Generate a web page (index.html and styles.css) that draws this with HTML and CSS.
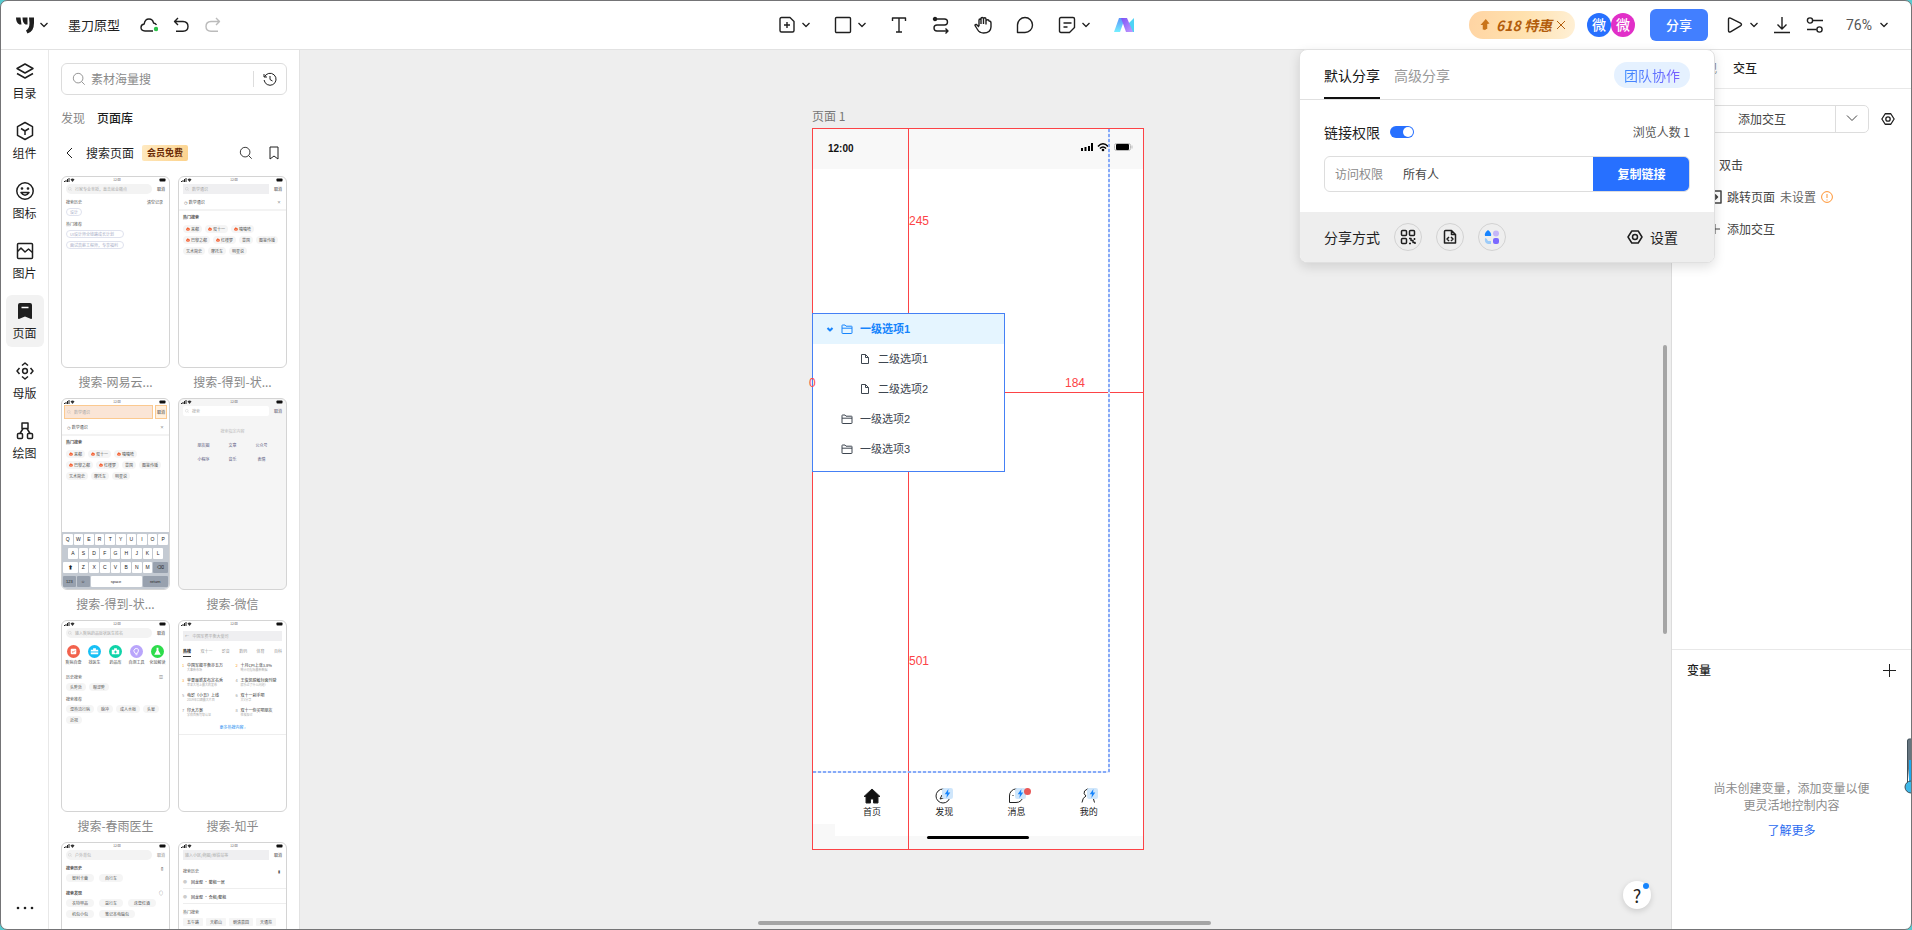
FILE: index.html
```html
<!DOCTYPE html>
<html lang="zh-CN">
<head>
  <meta charset="UTF-8">
  <title>墨刀原型</title>
  <meta name="viewport" content="width=device-width, initial-scale=1.0">
  <link rel="stylesheet" href="styles.css">
</head>
<body>
  <!-- shared icons -->
  <svg class="sprite" aria-hidden="true">
    <symbol id="chev" viewBox="0 0 8 8"><path d="M0.500 2l3.500 3.500L7.500 2"/></symbol>
    <symbol id="search" viewBox="0 0 16 16"><circle cx="7" cy="7" r="5.500"/><path d="M11 11l3.500 3.500"/></symbol>
    <symbol id="gear" viewBox="0 0 16 16"><path d="M4.800 2h6.400L15 8l-3.800 6H4.800L1 8z"/><circle cx="8" cy="8" r="2.500"/></symbol>
    <symbol id="signal" viewBox="0 0 11 4"><path d="M0 4V3h1v1zM1.500 4V2h1v2zM3 4V1h1v3zM4.500 4V0h1v4z" fill="#222"/><path d="M6.500 1.500Q8.500-.5 10.500 1.500L8.500 4z" fill="#333"/></symbol>
    <symbol id="battery" viewBox="0 0 7 4"><rect y="0.500" width="6" height="3" rx="0.800" fill="#111"/></symbol>
    <symbol id="flame" viewBox="0 0 4 4"><g stroke="none"><path d="M1.500 0Q3 .8 2.800 1.500L3.400 1Q4.600 3.900 2 4-.5 3.800.4 1.200L1 1.600Q1.600 1 1.500 0z" fill="#f4511e"/><circle cx="2" cy="2.900" r=".6" fill="#fff"/></g></symbol>
    <symbol id="folder" viewBox="0 0 12 12"><path d="M1 10V2.500Q1 2 1.500 2H4l1 1.200h5.500q.5 0 .5.500V10q0 .5-.5.500h-9Q1 10.500 1 10zM1 5.200h10"/></symbol>
    <symbol id="doc" viewBox="0 0 12 12"><path d="M2.500 1.500h4l3 3v6h-7zM6.500 1.500v3h3"/></symbol>
    <symbol id="bolt" viewBox="0 0 10 10"><g stroke="none"><rect width="10" height="10" rx="2" fill="#cfe6fb"/><path d="M5.800 1L2.500 5.600h2L4 9l3.500-4.800H5.500z" fill="#1684fc"/></g></symbol>
  </svg>

  <div class="window">
    <header class="topbar">
      <div class="bar-left">
        <button class="icon-btn pair" aria-label="菜单">
          <svg class="i18 solid" viewBox="0 0 18 18"><path d="M0 1.500h4.500l1 7H3.500Q0 7 0 1.500zM6.500 1.500h5v7H9.500Q6.500 7 6.500 1.500zM13 1.500h5V7q0 8.500-6.500 10.500L10 14.500Q13.500 12.500 13.500 7z"/></svg>
          <svg class="i8"><use href="#chev"/></svg>
        </button>
        <span class="project">墨刀原型</span>
        <div class="history">
          <button class="icon-btn" aria-label="已保存"><svg class="i18" viewBox="0 0 18 18"><path d="M13 15H5Q1 14.800 1 11.500 1 8.500 4.200 8 4.800 3 9 3q3.800 0 4.500 4 2 .3 3 2"/><circle cx="16" cy="13" r="2.200" fill="#2cc24a" stroke="none"/></svg></button>
          <button class="icon-btn" aria-label="撤销"><svg class="i18" viewBox="0 0 18 18"><path d="M6 2L2.500 5.500 6 9M3 5.500h8q5 .3 5 5 0 4.500-5 4.800H4"/></svg></button>
          <button class="icon-btn faded" aria-label="重做"><svg class="i18" viewBox="0 0 18 18"><path d="M12 2l3.500 3.500L12 9M15 5.500H7q-5 .3-5 5 0 4.500 5 4.800h7"/></svg></button>
        </div>
      </div>

      <div class="tools">
        <button class="icon-btn pair" aria-label="新建页面"><svg class="i18" viewBox="0 0 18 18"><path d="M3.500 1.500h8.500l4 4v9q0 1.500-1.500 1.500h-11Q2 16 2 14.500V3q0-1.500 1.500-1.500zM9 6v6M6 9h6"/></svg><svg class="i8"><use href="#chev"/></svg></button>
        <button class="icon-btn pair" aria-label="形状"><svg class="i18" viewBox="0 0 18 18"><rect x="1.500" y="1.500" width="15" height="15" rx="1"/></svg><svg class="i8"><use href="#chev"/></svg></button>
        <button class="icon-btn" aria-label="文字"><svg class="i18" viewBox="0 0 18 18"><path d="M2.500 5V2h13v3M9 2v14M6 16h6"/></svg></button>
        <button class="icon-btn" aria-label="连线"><svg class="i18" viewBox="0 0 18 18"><path d="M3 3h9.500q3 0 3 3t-3 3H5Q2 9 2 12t3 3h11M13.500 12.500L16 15l-2.500 2.500"/><circle cx="3" cy="3" r="1.500" fill="currentColor"/></svg></button>
        <button class="icon-btn" aria-label="抓手"><svg class="i18" viewBox="0 0 18 18"><path d="M5 10V4.200q0-1.200 1-1.200t1 1.200V8M7 8V2.800Q7 1.500 8.200 1.500T9.500 2.800V8M9.500 8V3q0-1.300 1.200-1.300T12 3v5.200M12 8.500V5q0-1.200 1.500-1.200T15 5q2 0 2 2v4q-.3 6-7.500 6-4 0-6-3.500L1 9.500q0-1.200 1.500-1L5 11"/></svg></button>
        <button class="icon-btn" aria-label="评论"><svg class="i18" viewBox="0 0 18 18"><path d="M1.500 16.500V9a7.500 7.500 0 1 1 7.500 7.500z"/></svg></button>
        <button class="icon-btn pair" aria-label="便签"><svg class="i18" viewBox="0 0 18 18"><path d="M3 1.500h12q1.500 0 1.500 1.500v8.500l-5 5H3q-1.500 0-1.500-1.500V3Q1.500 1.500 3 1.500zM5.500 7h8M5.500 11h4"/></svg><svg class="i8"><use href="#chev"/></svg></button>
        <button class="icon-btn" aria-label="AI">
          <svg class="i20" viewBox="0 0 20 18">
            <defs>
              <linearGradient id="aiA" x1="0" y1="1" x2="0" y2="0"><stop stop-color="#74f0ff"/><stop offset="1" stop-color="#5b93fa"/></linearGradient>
              <linearGradient id="aiB" x1="0" y1="0" x2="1" y2="1"><stop stop-color="#7b52f5"/><stop offset="1" stop-color="#c49bff"/></linearGradient>
            </defs>
            <g stroke="none"><path d="M0 16L5 2h6L6 16z" fill="url(#aiA)"/><path d="M13 9l7-7v14h-3z" fill="#4ed3f5"/><path d="M7 2h6l6 14h-7z" fill="url(#aiB)"/></g>
          </svg>
        </button>
      </div>

      <div class="bar-right">
        <div class="promo">
          <svg class="i12" viewBox="0 0 12 16"><path d="M7 0l5 6-3 .5V13q-2 0-3 2 0-1-3-1V8L0 8z" fill="#c9741b"/></svg>
          <b>618 特惠</b>
          <button class="icon-btn" aria-label="关闭"><svg class="i8" viewBox="0 0 8 8"><path d="M0 0l8 8M8 0L0 8"/></svg></button>
        </div>
        <div class="avatars"><span class="avatar">微</span><span class="avatar pink">微</span></div>
        <button class="share-btn">分享</button>
        <div class="actions">
          <button class="icon-btn pair" aria-label="预览"><svg class="i18" viewBox="0 0 18 18"><path d="M2.500 3.500q0-2 2-1.300l10 5q2 1.300 0 2.600l-10 6q-2 .8-2-1.200z"/></svg><svg class="i8"><use href="#chev"/></svg></button>
          <button class="icon-btn" aria-label="下载"><svg class="i18" viewBox="0 0 18 18"><path d="M9 1v12M4.500 8.500L9 13l4.500-4.500M1 16.500h16"/></svg></button>
          <button class="icon-btn" aria-label="偏好设置"><svg class="i18" viewBox="0 0 18 18"><circle cx="4" cy="4.500" r="2.600"/><path d="M6.600 4.500H17M1 13.500h9.500"/><circle cx="13.500" cy="13.500" r="2.600"/></svg></button>
        </div>
        <button class="icon-btn zoom">76%<svg class="i8"><use href="#chev"/></svg></button>
      </div>
    </header>

    <div class="workspace">
      <nav class="rail">
        <button class="rail-item"><svg class="i20" viewBox="0 0 20 20"><path d="M10 3l8 4.500-8 4.500-8-4.500zM2 12.500l8 4.500 8-4.500"/></svg>目录</button>
        <button class="rail-item"><svg class="i20" viewBox="0 0 20 20"><path d="M10 1.500l7.500 4.200v8.600L10 18.500l-7.500-4.200V5.700zM6 7.500L10 10l4-2.500M10 10v4"/></svg>组件</button>
        <button class="rail-item"><svg class="i20" viewBox="0 0 20 20"><circle cx="10" cy="10" r="8.200"/><path d="M6 11.500q4 5.500 8 0z"/><circle cx="7" cy="7.500" r=".6"/><circle cx="13" cy="7.500" r=".6"/></svg>图标</button>
        <button class="rail-item"><svg class="i20" viewBox="0 0 20 20"><rect x="2.500" y="2.500" width="15" height="15" rx="1"/><path d="M2.500 10.500L6 7l4 4 3.500-3 4 3.500"/></svg>图片</button>
        <button class="rail-item active"><svg class="i20" viewBox="0 0 20 20"><path d="M5 2h10q2 0 2 2v13q0 1.500-1.500.8L10 15.500 4.500 17.800Q3 18.500 3 17V4q0-2 2-2z" fill="currentColor" stroke="none"/><path d="M6.500 6.500h7" stroke="#fff"/></svg>页面</button>
        <button class="rail-item"><svg class="i20" viewBox="0 0 20 20"><circle cx="10" cy="10" r="2.400"/><path d="M7 4.500L10 2l3 2.500M7 15.500l3 2.500 3-2.500M4.500 7L2 10l2.500 3M15.500 7l2.500 3-2.500 3"/></svg>母版</button>
        <button class="rail-item"><svg class="i20" viewBox="0 0 20 20"><rect x="7" y="2" width="6" height="5.500"/><rect x="2.500" y="12.500" width="5" height="5" rx="1"/><rect x="12.500" y="12.500" width="5" height="5" rx="1"/><path d="M8 7.500l-3 5M12 7.500l3 5"/></svg>绘图</button>
        <button class="icon-btn more" aria-label="更多"><svg class="i18 solid" viewBox="0 0 18 18"><circle cx="2" cy="9" r="1.300"/><circle cx="9" cy="9" r="1.300"/><circle cx="16" cy="9" r="1.300"/></svg></button>
      </nav>

      <aside class="library">
        <div class="searchbox">
          <svg class="i14"><use href="#search"/></svg>
          <input type="text" placeholder="素材海量搜" aria-label="素材海量搜">
          <button class="icon-btn" aria-label="历史"><svg class="i14" viewBox="0 0 14 14"><path d="M1 2v3h3M1.500 5a6 6 0 1 1-.4 3M7 4v3.500L9.500 9"/></svg></button>
        </div>
        <div class="lib-tabs"><button>发现</button><button class="on">页面库</button></div>
        <div class="crumb">
          <button class="icon-btn" aria-label="返回"><svg class="i10" viewBox="0 0 10 10"><path d="M7 0L2 5l5 5"/></svg></button>
          <span>搜索页面</span>
          <b class="vip">会员免费</b>
          <button class="icon-btn push" aria-label="搜索"><svg class="i14"><use href="#search"/></svg></button>
          <button class="icon-btn" aria-label="收藏"><svg class="i14" viewBox="0 0 14 14"><path d="M3 1h8v12L7 10l-4 3z"/></svg></button>
        </div>

        <div class="cards">
          <figure>
            <div class="thumb">
              <div class="st"><svg><use href="#signal"/></svg>12:00<svg><use href="#battery"/></svg></div>
              <div class="find"><span class="box round"><svg><use href="#search"/></svg>行家专业亲授，直击就业痛点</span><b>取消</b></div>
              <div class="row"><span>搜索历史</span><span>清空记录</span></div>
              <div class="chips line"><i>设计</i></div>
              <div class="row">热门推荐</div>
              <div class="chips line wide"><i>UI设计师全链路成长计划</i><i>面试高薪工程师，专享福利</i></div>
            </div>
            <figcaption>搜索-网易云...</figcaption>
          </figure>

          <figure>
            <div class="thumb">
              <div class="st"><svg><use href="#signal"/></svg>12:00<svg><use href="#battery"/></svg></div>
              <div class="find"><span class="box"><svg><use href="#search"/></svg>数学通识</span><b>取消</b></div>
              <div class="row recent"><span>◷&nbsp; 数学通识</span><span>×</span></div>
              <h6>热门搜索</h6>
              <div class="chips">
                <i><svg><use href="#flame"/></svg>来都</i><i><svg><use href="#flame"/></svg>双十一</i><i><svg><use href="#flame"/></svg>嘻嘻哈</i>
              </div>
              <div class="chips">
                <i><svg><use href="#flame"/></svg>巴黎之都</i><i><svg><use href="#flame"/></svg>红楼梦</i><i>曾国</i><i>图鉴传播</i>
              </div>
              <div class="chips"><i>艺术简史</i><i>摩托车</i><i>明星说</i></div>
            </div>
            <figcaption>搜索-得到-状...</figcaption>
          </figure>

          <figure>
            <div class="thumb">
              <div class="st"><svg><use href="#signal"/></svg>12:00<svg><use href="#battery"/></svg></div>
              <div class="find marked"><span class="box"><svg><use href="#search"/></svg>数学通识</span><b>取消</b></div>
              <div class="row recent"><span>◷&nbsp; 数学通识</span><span>×</span></div>
              <h6>热门搜索</h6>
              <div class="chips">
                <i><svg><use href="#flame"/></svg>来都</i><i><svg><use href="#flame"/></svg>双十一</i><i><svg><use href="#flame"/></svg>嘻嘻哈</i>
              </div>
              <div class="chips">
                <i><svg><use href="#flame"/></svg>巴黎之都</i><i><svg><use href="#flame"/></svg>红楼梦</i><i>曾国</i><i>图鉴传播</i>
              </div>
              <div class="chips"><i>艺术简史</i><i>摩托车</i><i>明星说</i></div>
              <div class="keyboard">
                <div><kbd>Q</kbd><kbd>W</kbd><kbd>E</kbd><kbd>R</kbd><kbd>T</kbd><kbd>Y</kbd><kbd>U</kbd><kbd>I</kbd><kbd>O</kbd><kbd>P</kbd></div>
                <div class="mid"><kbd>A</kbd><kbd>S</kbd><kbd>D</kbd><kbd>F</kbd><kbd>G</kbd><kbd>H</kbd><kbd>J</kbd><kbd>K</kbd><kbd>L</kbd></div>
                <div><kbd class="k2">⬆</kbd><kbd>Z</kbd><kbd>X</kbd><kbd>C</kbd><kbd>V</kbd><kbd>B</kbd><kbd>N</kbd><kbd>M</kbd><kbd class="k2 dark">⌫</kbd></div>
                <div class="last"><kbd class="k2 dark">123</kbd><kbd class="k2 dark">☺</kbd><kbd class="k8">space</kbd><kbd class="k4 dark">return</kbd></div>
              </div>
            </div>
            <figcaption>搜索-得到-状...</figcaption>
          </figure>

          <figure>
            <div class="thumb gray">
              <div class="st"><svg><use href="#signal"/></svg>12:00<svg><use href="#battery"/></svg></div>
              <div class="find"><span class="box"><svg><use href="#search"/></svg>搜索</span><b>取消</b></div>
              <p class="hint">搜索指定内容</p>
              <div class="scopes"><span>朋友圈</span><span>文章</span><span>公众号</span><span>小程序</span><span>音乐</span><span>表情</span></div>
            </div>
            <figcaption>搜索-微信</figcaption>
          </figure>

          <figure>
            <div class="thumb">
              <div class="st"><svg><use href="#signal"/></svg>12:00<svg><use href="#battery"/></svg></div>
              <div class="find"><span class="box round"><svg><use href="#search"/></svg>输入疾病药品症状医生姓名</span><b>取消</b></div>
              <div class="apps">
                <span><svg viewBox="0 0 14 14"><circle cx="7" cy="7" r="7" fill="#f2624d"/><rect x="4" y="4" width="6" height="6" rx="1" fill="#fff"/><path d="M5.500 7l1 1 2-2" stroke="#f2624d"/></svg>疾病自查</span>
                <span><svg viewBox="0 0 14 14"><circle cx="7" cy="7" r="7" fill="#16bff5"/><path d="M3 5h8v5H3zM5.500 5V3.500h3V5" fill="#fff"/><path d="M3 7.500h8" stroke="#16bff5"/></svg>找医生</span>
                <span><svg viewBox="0 0 14 14"><circle cx="7" cy="7" r="7" fill="#0fd3a8"/><path d="M3 5h8v5H3zM5.500 5V3.500h3V5" fill="#fff"/><path d="M7 6v3M5.500 7.500h3" stroke="#0fd3a8"/></svg>药品库</span>
                <span><svg viewBox="0 0 14 14"><circle cx="7" cy="7" r="7" fill="#b9a5fb"/><path d="M5.500 9q-3-3 0-5 4-1 3.500 2.500L8 9zM6 10.500h2" stroke="#fff" fill="none"/></svg>自测工具</span>
                <span><svg viewBox="0 0 14 14"><circle cx="7" cy="7" r="7" fill="#2ddc4b"/><path d="M6 3h2v3l2.500 4.500h-7L6 6z" fill="#fff"/></svg>化验解读</span>
              </div>
              <div class="row"><span>历史搜索</span><span>▥</span></div>
              <div class="chips roomy"><i>头疼处</i><i>眼涩疼</i></div>
              <div class="row">搜索推荐</div>
              <div class="chips roomy"><i>湿热流行病</i><i>脉冲</i><i>成人水痘</i><i>头晕</i></div>
              <div class="chips roomy"><i>近视</i></div>
            </div>
            <figcaption>搜索-春雨医生</figcaption>
          </figure>

          <figure>
            <div class="thumb">
              <div class="st"><svg><use href="#signal"/></svg>12:00<svg><use href="#battery"/></svg></div>
              <div class="find tall"><span class="box">←&nbsp;&nbsp;&nbsp; 中国军费平衡大使司</span></div>
              <div class="channels"><b>热榜</b><span>双十一</span><span>影音</span><span>数码</span><span>体育</span><span>百科</span></div>
              <div class="hot">
                <p><em>1</em>中国军舰平衡亦五万<small>大事新市场</small></p><p><em>2</em>十月CPI上涨3.8%<small>统计局指标最新数据</small></p>
                <p><em>3</em>苹果最新发布定名秀<small>苹果大地上最大的发布</small></p><p><u>4</u>王俊凯脱敏封面刊登<small>娱乐过了什么问题?</small></p>
                <p><u>5</u>电影《小丑》上线<small>2019年口碑最大片目</small></p><p><u>6</u>双十一剁手吧<small>大V分享</small></p>
                <p><u>7</u>印大方案<small>学校首款可穿认证</small></p><p><u>8</u>双十一你买吧朋友<small>性格探讨</small></p>
              </div>
              <p class="all">更多热搜内容 ›</p>
            </div>
            <figcaption>搜索-知乎</figcaption>
          </figure>

          <figure>
            <div class="thumb">
              <div class="st"><svg><use href="#signal"/></svg>12:00<svg><use href="#battery"/></svg></div>
              <div class="find light"><span class="box round"><svg><use href="#search"/></svg>户外背包</span><b>取消</b></div>
              <div class="row strong"><span>搜索历史</span><span>▯</span></div>
              <div class="chips big"><i>智利卡蕾</i><i>自行车</i></div>
              <div class="row strong low"><span>搜索发现</span><span>○</span></div>
              <div class="chips big"><i>农特甲品</i><i>益行车</i><i>床垫红酒</i></div>
              <div class="chips big"><i>机包小包</i><i>笔记本电脑包</i></div>
            </div>
          </figure>

          <figure>
            <div class="thumb">
              <div class="st"><svg><use href="#signal"/></svg>12:00<svg><use href="#battery"/></svg></div>
              <div class="find"><span class="box">输入小区/商圈/地铁站等</span><b>取消</b></div>
              <div class="row low"><span>搜索历史</span><span>▮</span></div>
              <div class="row place"><small>●</small>回龙观 · 整租一居</div>
              <div class="row place"><small>●</small>回龙观 · 合租/整租</div>
              <div class="row">热门搜索</div>
              <div class="chips square roomy"><i>五午路</i><i>天鹅山</i><i>朝清嘉园</i><i>天通苑</i></div>
            </div>
          </figure>
        </div>
      </aside>

      <main class="canvas">
        <div class="page">
          <div class="page-name">页面 1</div>
          <div class="phone">
            <div class="phone-status">
              <b>12:00</b>
              <svg viewBox="0 0 52 10"><path d="M0 9V6h2v3zM3.500 9V5h2v4zM7 9V4h2v5zM10 9V1h2v8z"/><path d="M17 4.500Q22-1 27 4.500M19 6.500q3-3 6 0" fill="none" stroke="#000" stroke-width="1.600"/><circle cx="22" cy="8" r="1.300"/><rect x="33.500" y="1.500" width="16" height="7" rx="2" fill="none" stroke="#bbb"/><rect x="35" y="2" width="13" height="6" rx="1"/><path d="M51 3.500v3" stroke="#bbb"/></svg>
            </div>
            <div class="phone-body">
              <ul class="tree">
                <li class="sel"><svg class="i8 bold" viewBox="0 0 8 8"><path d="M1.500 3L4 5.500 6.500 3"/></svg><svg class="i12"><use href="#folder"/></svg>一级选项1</li>
                <li class="sub"><svg class="i12"><use href="#doc"/></svg>二级选项1</li>
                <li class="sub"><svg class="i12"><use href="#doc"/></svg>二级选项2</li>
                <li><svg class="i12"><use href="#folder"/></svg>一级选项2</li>
                <li><svg class="i12"><use href="#folder"/></svg>一级选项3</li>
              </ul>
            </div>
            <div class="tabbar">
              <a href="#home"><svg viewBox="0 0 20 16"><path d="M10 1l8 7.500h-2V15h-4.500v-4h-3v4H4V8.500H2z" fill="#111"/></svg>首页</a>
              <a href="#find"><svg viewBox="0 0 20 16"><circle cx="9" cy="8" r="7"/><path d="M6 11l2-4 2 3z"/><use href="#bolt" x="8" y="0" width="11" height="11"/></svg>发现</a>
              <a href="#msg"><svg viewBox="0 0 20 16"><path d="M2.500 14.500V8A6.800 6.800 0 1 1 9 14.500z"/><path d="M6 7v1"/><use href="#bolt" x="8" y="0" width="11" height="11"/></svg>消息<span class="dot"></span></a>
              <a href="#me"><svg viewBox="0 0 20 16"><path d="M7 8Q4 6 5.500 3 8-.5 12 2M7 8q-3.500 1.500-4 6.500M12 8q3 2 3.500 6.500"/><use href="#bolt" x="8" y="0" width="11" height="11"/></svg>我的</a>
            </div>
            <div class="home-area"><span></span></div>

            <span class="guide v"></span>
            <span class="guide h"></span>
            <span class="guide dash"></span>
            <span class="num top">245</span>
            <span class="num left">0</span>
            <span class="num right">184</span>
            <span class="num bottom">501</span>
          </div>
        </div>
        <span class="scroll-v"></span>
        <span class="scroll-h"></span>
        <button class="help" aria-label="帮助">?</button>
      </main>

      <aside class="inspector">
        <div class="ins-tabs"><button>外观</button><button class="on">交互</button></div>
        <div class="ins-body">
          <div class="add-row">
            <div class="split"><button>添加交互</button><button aria-label="更多"><svg class="i12" viewBox="0 0 12 12"><path d="M1 3.500l5 5 5-5"/></svg></button></div>
            <button class="icon-btn" aria-label="交互设置"><svg class="i14 mid-line"><use href="#gear"/></svg></button>
          </div>
          <ul class="events">
            <li><span></span>双击</li>
            <li><svg class="i14 mid-line" viewBox="0 0 14 14"><path d="M4 1h9v12H4M1 7h8M7 4.500L9.500 7 7 9.500"/></svg>跳转页面<em>未设置</em><svg class="i12 warn" viewBox="0 0 12 12"><circle cx="6" cy="6" r="5.400"/><path d="M6 3v4M6 8.500v1"/></svg></li>
            <li><svg class="i14" viewBox="0 0 14 14"><path d="M2 7h10M7 2v10"/></svg>添加交互</li>
          </ul>
        </div>
        <section class="vars">
          <h3>变量<button class="icon-btn" aria-label="添加变量"><svg class="i14" viewBox="0 0 14 14"><path d="M7.500 1v13M1 7.500h13"/></svg></button></h3>
          <div class="empty">
            <p>尚未创建变量，添加变量以便<br>更灵活地控制内容</p>
            <a href="#more">了解更多</a>
          </div>
        </section>
      </aside>
    </div>

    <div class="popover">
      <div class="pop-head">
        <button class="on">默认分享</button><button>高级分享</button>
        <button class="team"><span>团队协作</span></button>
      </div>
      <div class="pop-body">
        <div class="perm">
          <label for="link">链接权限</label><input type="checkbox" id="link" checked>
          <span>浏览人数 1</span>
        </div>
        <div class="access">
          <label for="who">访问权限</label>
          <select id="who"><option>所有人</option></select>
          <button>复制链接</button>
        </div>
      </div>
      <div class="pop-foot">
        <span>分享方式</span>
        <button class="way" aria-label="二维码"><svg class="i16" viewBox="0 0 16 16"><rect x="1.500" y="1.500" width="5" height="5" rx="1"/><rect x="9.500" y="1.500" width="5" height="5" rx="1"/><rect x="1.500" y="9.500" width="5" height="5" rx="1"/><path d="M9 9.500h2v2h2v2h2v1.500M14.500 9v2M9 14.500h2"/></svg></button>
        <button class="way" aria-label="嵌入代码"><svg class="i16" viewBox="0 0 16 16"><path d="M3.500 1.500h6l4 4v8.500h-11V2.500q0-1 1-1zM9.500 1.500v4h4M7 8l-2 2 2 2M9 8l2 2-2 2"/></svg></button>
        <button class="way" aria-label="应用"><svg class="i16" viewBox="0 0 16 16"><g stroke="none"><path d="M4 1q4 3 3 6H1Q0 4 4 1z" fill="#1784ff"/><circle cx="12" cy="4.500" r="3" fill="#c4b5f8"/><path d="M1 9q2 0 3 3 1 0 3 0v3H4q-4-1-3-6z" fill="#9ccbf8"/><rect x="9" y="9" width="6" height="6" rx="2" fill="#7b68ff"/></g></svg></button>
        <button class="settings"><svg class="i16"><use href="#gear"/></svg>设置</button>
      </div>
    </div>

    <svg class="meter" viewBox="0 0 8 56"><path d="M8 1H5Q3.500 1 3.500 3v43" fill="#66757f" stroke="#40505a"/><path d="M8 0v22H5V3q0-2 3-2z" fill="#66757f"/><path d="M5 22h3v26H5z" fill="#1fa8ee"/><circle cx="7" cy="49" r="6" fill="#3db8e8" stroke="#40505a"/></svg>
  </div>
</body>
</html>
```
FILE: styles.css
```css
* {
  box-sizing: border-box;
}
body {
  margin: 0;
  height: 100vh;
  background: #56cbd0;
  color: #1f1f1f;
  font-family: "Noto Sans CJK SC", "Liberation Sans", sans-serif;
  font-size: 12px;
  line-height: 16px;
}
button, input, select {
  font: inherit;
  color: inherit;
}
button {
  padding: 0;
  border: 0;
  background: none;
  cursor: pointer;
}
svg {
  flex: none;
  fill: none;
  stroke: currentColor;
  stroke-linejoin: round;
}
p, h3, h6, ul, figure {
  margin: 0;
  padding: 0;
}
ul {
  list-style: none;
}
em, i {
  font-style: normal;
}
.sprite {
  display: none;
}
.i8 { width: 8px; height: 8px; stroke-width: 1.3; }
.i10 { width: 10px; height: 10px; }
.i12 { width: 12px; height: 12px; }
.i14 { width: 14px; height: 14px; }
.i16 { width: 16px; height: 16px; stroke-width: 1.5; }
.i18 { width: 18px; height: 18px; stroke-width: 1.4; }
.i20 { width: 20px; height: 20px; stroke-width: 1.5; }
.bold { stroke-width: 2; }
.mid-line { stroke-width: 1.5; }
.solid {
  fill: currentColor;
  stroke: none;
}
.icon-btn {
  display: flex;
  align-items: center;
}
.pair {
  gap: 6px;
}
.faded {
  color: #bbb;
}

.window {
  position: relative;
  display: flex;
  flex-direction: column;
  height: 100vh;
  border: 1px solid #747476;
  border-radius: 7px;
  background: #fff;
  overflow: hidden;
}

/* top bar */
.topbar {
  display: grid;
  grid-template-columns: 1fr auto 1fr;
  align-items: center;
  height: 49px;
  flex: none;
  border-bottom: 1px solid #e2e2e2;
}
.bar-left, .bar-right, .tools, .history, .actions, .avatars {
  display: flex;
  align-items: center;
}
.bar-left {
  padding-left: 15px;
  gap: 20px;
}
.project {
  font-size: 13px;
}
.history {
  gap: 14px;
}
.tools {
  gap: 24px;
}
.bar-right {
  justify-content: flex-end;
  padding-right: 23px;
}
.promo {
  display: flex;
  align-items: center;
  gap: 5px;
  height: 28px;
  margin-right: 12px;
  padding: 0 10px;
  border-radius: 14px;
  background: linear-gradient(100deg, #ffd4a3, #ffe1ae 50%, #fff0d6);
  color: #b35d0c;
}
.promo svg {
  stroke-width: 1;
}
.promo > svg {
  stroke: none;
}
.promo b {
  font-size: 14px;
  font-style: italic;
}
.avatars {
  margin-right: 15px;
}
.avatar {
  width: 24px;
  height: 24px;
  border-radius: 50%;
  background: #2770ff;
  color: #fff;
  font-size: 14px;
  font-weight: 500;
  line-height: 23px;
  text-align: center;
}
.avatar.pink {
  background: #e12fc8;
}
.share-btn {
  width: 58px;
  height: 32px;
  margin-right: 18px;
  border-radius: 6px;
  background: #427fff;
  color: #fff;
  font-size: 13px;
  font-weight: 500;
}
.actions {
  gap: 15px;
  margin-right: 22px;
}
.zoom {
  gap: 8px;
  font-family: Roboto, "Liberation Sans", sans-serif;
  font-size: 14px;
  color: #555;
}
.zoom svg {
  color: #1f1f1f;
}

.workspace {
  display: flex;
  flex: 1;
  min-height: 0;
}

/* left rail */
.rail {
  display: flex;
  flex-direction: column;
  align-items: center;
  gap: 8px;
  width: 48px;
  flex: none;
  padding: 5px 0 12px;
  border-right: 1px solid #e8e8e8;
}
.rail-item {
  display: flex;
  flex-direction: column;
  align-items: center;
  justify-content: center;
  gap: 4px;
  width: 38px;
  height: 52px;
  border-radius: 6px;
}
.rail-item.active {
  background: #f2f2f2;
}
.more {
  margin-top: auto;
}

/* page library */
.library {
  width: 251px;
  flex: none;
  padding: 13px 12px 0;
  border-right: 1px solid #e2e2e2;
  overflow: hidden;
}
.searchbox {
  display: flex;
  align-items: center;
  gap: 5px;
  height: 32px;
  padding: 0 9px 0 10px;
  border: 1px solid #dcdcdc;
  border-radius: 6px;
}
.searchbox > svg {
  color: #888;
}
.searchbox input {
  flex: 1;
  min-width: 0;
  border: 0;
  padding: 0;
  outline: 0;
}
.searchbox input::placeholder {
  color: #8a8a8a;
}
.searchbox .icon-btn {
  padding-left: 9px;
  height: 16px;
  border-left: 1px solid #ddd;
}
.lib-tabs {
  display: flex;
  gap: 12px;
  margin-top: 15px;
}
.lib-tabs button {
  color: #888;
}
.lib-tabs .on {
  color: #1f1f1f;
  font-weight: 500;
}
.crumb {
  display: flex;
  align-items: center;
  gap: 8px;
  margin: 18px 6px 14px 4px;
  height: 18px;
}
.crumb > span {
  margin-left: 3px;
}
.vip {
  padding: 0 5px;
  border-radius: 2px;
  background: linear-gradient(120deg, #ffeac2, #fcd28b);
  color: #6b2b06;
  font-size: 9px;
}
.push {
  margin-left: auto;
  margin-right: 6px;
}
.cards {
  display: grid;
  grid-template-columns: 1fr 1fr;
  gap: 8px;
}
figcaption {
  height: 22px;
  padding-top: 6px;
  color: #888;
  text-align: center;
}

/* thumbnails */
.thumb {
  display: flex;
  flex-direction: column;
  height: 192px;
  border: 1px solid #d4d4d4;
  border-radius: 6px;
  overflow: hidden;
  font-size: 4px;
  line-height: 6px;
  color: #555;
}
.thumb.gray {
  background: #f5f5f5;
}
.thumb svg {
  width: 4px;
  height: 4px;
}
.st {
  display: flex;
  justify-content: space-between;
  align-items: center;
  height: 6px;
  padding: 0 2px;
  font-size: 3px;
}
.st svg:first-child {
  width: 11px;
  stroke: none;
}
.st svg:last-child {
  width: 8px;
  stroke: none;
}
.find {
  display: flex;
  align-items: center;
  gap: 5px;
  margin: 1px 4px 0;
  height: 10px;
}
.find .box {
  display: flex;
  align-items: center;
  gap: 3px;
  flex: 1;
  height: 10px;
  padding: 0 2px;
  background: #efeff1;
  color: #aaa;
}
.find .round {
  border-radius: 5px;
  background: #f3f3f3;
}
.find b {
  font-weight: 500;
}
.find.light b {
  color: #999;
}
.find.marked {
  gap: 2px;
  height: 14px;
  margin: 0 2px;
  align-items: stretch;
}
.find.marked .box, .find.marked b {
  height: 14px;
  border: 1px solid #fbc98f;
  background: #fae5d6;
  line-height: 12px;
}
.find.marked b {
  padding: 0 1px;
  background: #fff0de;
}
.find.tall {
  margin-top: 4px;
}
.gray .find .box {
  border-radius: 2px;
  background: #fff;
}
.gray .find b {
  color: #667;
}
.row {
  display: flex;
  justify-content: space-between;
  margin: 5px 6px 0 4px;
}
.low {
  margin-top: 8px;
}
.strong {
  font-weight: 700;
}
.recent {
  margin: 0;
  padding: 5px 5px 4px;
  border-bottom: 2px solid #f3f3f3;
}
.thumb h6 {
  margin: 3px 4px 2px;
  font-size: 4px;
}
.chips {
  display: flex;
  gap: 3px;
  margin: 3px 4px 0;
}
.chips i {
  display: flex;
  align-items: center;
  gap: 1px;
  height: 8px;
  padding: 0 3px;
  border-radius: 4px;
  background: #f5f5f5;
  white-space: nowrap;
}
.roomy i {
  padding: 0 4px;
}
.line i {
  border: 1px solid #dfe2ee;
  background: #fff;
  color: #a8aec8;
}
.wide {
  flex-direction: column;
  align-items: flex-start;
}
.wide i {
  width: 58px;
}
.big {
  gap: 5px;
}
.big i {
  padding: 0 6px;
}
.square i {
  border-radius: 1px;
}
.place {
  gap: 4px;
  margin-right: 0;
  padding-bottom: 3px;
  border-bottom: 1px solid #eee;
  justify-content: flex-start;
  color: #333;
}
.place small {
  font-size: 4px;
  color: #ccc;
}
.keyboard {
  display: flex;
  flex-direction: column;
  gap: 3px;
  margin-top: auto;
  padding: 2px 1px;
  background: #c4cad2;
}
.keyboard div {
  display: flex;
  gap: 1px;
}
.keyboard .mid {
  padding: 0 5px;
}
.keyboard kbd {
  flex: 1;
  height: 11px;
  border-radius: 1px;
  background: #fff;
  color: #222;
  font: 5px/11px "Liberation Sans", sans-serif;
  text-align: center;
}
.keyboard .k2 {
  flex: 1.5;
}
.keyboard .k4 {
  flex: 3;
}
.keyboard .k8 {
  flex: 6;
}
.keyboard .last kbd {
  font-size: 4px;
}
.keyboard .dark {
  background: #98a1ae;
}
.hint {
  padding-top: 12px;
  text-align: center;
  color: #bbb;
}
.scopes {
  display: grid;
  grid-template-columns: repeat(3, 1fr);
  gap: 8px 0;
  padding: 8px 10px;
  text-align: center;
  color: #5a5a80;
}
.apps {
  display: flex;
  justify-content: space-between;
  margin: 7px 2px 4px;
}
.apps span {
  display: flex;
  flex-direction: column;
  align-items: center;
  gap: 1px;
  width: 19px;
}
.apps svg {
  width: 13px;
  height: 13px;
  stroke: none;
}
.channels {
  display: flex;
  justify-content: space-between;
  margin: 7px 4px 6px;
  color: #999;
}
.channels b {
  padding-bottom: 2px;
  border-bottom: 1px solid #333;
  color: #111;
}
.hot {
  display: grid;
  grid-template-columns: 1fr 1fr;
  gap: 5px 6px;
  padding: 0 3px;
  line-height: 5px;
  color: #333;
}
.hot p {
  white-space: nowrap;
}
.hot em, .hot u {
  display: inline-block;
  width: 5px;
  color: #f9a01b;
  text-decoration: none;
}
.hot u {
  color: #999;
}
.hot small {
  display: block;
  padding-left: 5px;
  font-size: 3px;
  color: #aaa;
}
.all {
  padding: 6px 0 4px;
  border-bottom: 1px solid #eee;
  color: #1b8cf0;
  text-align: center;
}

/* canvas */
.canvas {
  position: relative;
  display: flex;
  justify-content: center;
  flex: 1;
  min-width: 0;
  padding: 58px 15px 0 0;
  background: #eee;
  overflow: hidden;
}
.page {
  width: 332px;
}
.page-name {
  height: 20px;
  line-height: 15px;
  color: #777;
}
.phone {
  position: relative;
  display: flex;
  flex-direction: column;
  height: 722px;
  border: 1px solid #fc4346;
  background: #fff;
}
.phone-status {
  display: flex;
  justify-content: space-between;
  height: 40px;
  padding: 13px 10px 0 15px;
  background: #f8f8f8;
}
.phone-status b {
  color: #111;
  font: 700 10px/14px "Liberation Sans", sans-serif;
}
.phone-status svg {
  width: 52px;
  height: 10px;
  fill: #000;
  stroke: none;
}
.phone-body {
  flex: 1;
  padding-top: 144px;
}
.tree {
  position: relative;
  z-index: 1;
  width: 193px;
  height: 159px;
  margin-left: -1px;
  border: 1px solid #4580f5;
  background: #fff;
  color: #3e4650;
  font-family: "Liberation Sans", "Noto Sans CJK SC", sans-serif;
  font-size: 11px;
}
.tree li {
  display: flex;
  align-items: center;
  gap: 7px;
  height: 30px;
  padding-left: 28px;
}
.tree .sel {
  padding-left: 13px;
  background: #e5f5ff;
  color: #1684fc;
  font-weight: 700;
}
.tree .sub {
  padding-left: 46px;
}
.tabbar {
  display: flex;
  height: 52px;
  padding: 4px 18px 0 23px;
  background: linear-gradient(#f8f8f8, #f8f8f8) left bottom / 22px 12px no-repeat;
}
.tabbar a {
  position: relative;
  display: flex;
  flex-direction: column;
  align-items: center;
  gap: 1px;
  flex: 1;
  color: #222;
  font-size: 9px;
  line-height: 14px;
  text-decoration: none;
}
.tabbar svg {
  width: 20px;
  height: 16px;
}
.dot {
  position: absolute;
  top: 0;
  left: 43px;
  width: 7px;
  height: 7px;
  border-radius: 50%;
  background: #e85858;
}
.home-area {
  height: 13px;
  background: #f8f8f8;
}
.home-area span {
  display: block;
  width: 102px;
  height: 3px;
  margin: 0 auto;
  border-radius: 2px;
  background: #000;
}

/* distance guides, laid over the artboard */
.guide, .num {
  position: absolute;
}
.guide.v {
  left: 95px;
  top: 0;
  bottom: 0;
  width: 1px;
  background: #fc4346;
}
.guide.h {
  left: 192px;
  right: 0;
  top: 263px;
  height: 1px;
  background: #fc4346;
}
.guide.dash {
  left: 0;
  top: 0;
  width: 297px;
  height: 644px;
  background:
    repeating-linear-gradient(#86aaf8 0 3px, #e4ecfd 3px 5px) right top / 2px 100% no-repeat,
    repeating-linear-gradient(90deg, #86aaf8 0 3px, #e4ecfd 3px 5px) left bottom / 100% 2px no-repeat;
}
.num {
  z-index: 2;
  color: #fc4346;
  font-family: "Liberation Sans", sans-serif;
}
.num.top {
  left: 96px;
  top: 84px;
}
.num.bottom {
  left: 96px;
  top: 524px;
}
.num.left {
  left: -4px;
  top: 246px;
}
.num.right {
  right: 58px;
  top: 246px;
}
.scroll-v, .scroll-h {
  position: absolute;
  border-radius: 2px;
  background: #a5a5a5;
}
.scroll-v {
  right: 4px;
  top: 295px;
  width: 4px;
  height: 289px;
}
.scroll-h {
  left: 458px;
  bottom: 4px;
  width: 453px;
  height: 4px;
}
.help {
  position: absolute;
  right: 20px;
  bottom: 20px;
  width: 28px;
  height: 28px;
  border-radius: 50%;
  background: #fff;
  box-shadow: 0 2px 6px rgba(0,0,0,0.15);
  font-size: 18px;
}
.help::after {
  content: "";
  position: absolute;
  top: 2px;
  right: 2px;
  width: 6px;
  height: 6px;
  border-radius: 50%;
  background: #1684fc;
}

/* right panel */
.inspector {
  display: flex;
  flex-direction: column;
  width: 240px;
  flex: none;
  border-left: 1px solid #dcdcdc;
}
.ins-tabs {
  display: flex;
  gap: 16px;
  height: 39px;
  padding: 0 0 2px 21px;
  border-bottom: 1px solid #e8e8e8;
  color: #888;
}
.ins-tabs .on {
  color: #1f1f1f;
  font-weight: 500;
}
.ins-body {
  flex: 1;
  padding: 16px;
}
.add-row {
  display: flex;
  justify-content: space-between;
  align-items: center;
}
.split {
  display: flex;
  width: 181px;
  height: 28px;
  border: 1px solid #ddd;
  border-radius: 5px;
  color: #444;
}
.split button:first-child {
  flex: 1;
}
.split button:last-child {
  width: 33px;
  border-left: 1px solid #ddd;
}
.events {
  margin-top: 16px;
}
.events li {
  display: flex;
  align-items: center;
  height: 32px;
  padding-left: 20px;
  gap: 5px;
  color: #444;
}
.events span {
  width: 6px;
}
.events em {
  color: #666;
}
.warn {
  color: #ff9330;
}
.vars {
  height: 280px;
  padding: 12px 15px;
  border-top: 1px solid #e8e8e8;
}
.vars h3 {
  display: flex;
  justify-content: space-between;
  font-size: 12px;
  font-weight: 500;
}
.empty {
  padding-top: 101px;
  text-align: center;
  line-height: 17px;
  color: #8c8c8c;
}
.empty a {
  display: block;
  margin-top: 8px;
  color: #2b6bf0;
  text-decoration: none;
}

/* share popover */
.popover {
  position: absolute;
  top: 48px;
  right: 196px;
  width: 416px;
  border: 1px solid #e0e0e0;
  border-radius: 8px;
  background: #fff;
  box-shadow: 0 4px 12px rgba(0,0,0,0.12);
  overflow: hidden;
}
.pop-head {
  display: flex;
  align-items: center;
  gap: 14px;
  height: 50px;
  padding: 0 24px;
  border-bottom: 1px solid #e0e0e0;
  font-size: 14px;
  color: #999;
}
.pop-head .on {
  height: 49px;
  padding-top: 2px;
  border-bottom: 2px solid #111;
  color: #111;
}
.team {
  height: 26px;
  margin-left: auto;
  padding: 0 10px;
  border-radius: 13px;
  background: #e5f1ff;
}
.team span {
  background: linear-gradient(90deg, #3d8cff, #7a5cff);
  background-clip: text;
  -webkit-background-clip: text;
  color: transparent;
}
.pop-body {
  padding: 23px 24px 20px;
}
.perm {
  display: flex;
  align-items: center;
  gap: 10px;
  height: 18px;
  font-size: 14px;
}
.perm input {
  appearance: none;
  display: flex;
  justify-content: flex-end;
  width: 24px;
  height: 12px;
  margin: 0;
  padding: 1px;
  border-radius: 6px;
  background: #2770ff;
}
.perm input::before {
  content: "";
  width: 10px;
  height: 10px;
  border-radius: 50%;
  background: #fff;
}
.perm span {
  margin-left: auto;
  color: #555;
  font-size: 12px;
}
.access {
  display: flex;
  align-items: center;
  height: 36px;
  margin-top: 15px;
  border: 1px solid #ddd;
  border-radius: 6px;
  overflow: hidden;
}
.access label {
  padding: 0 20px 0 10px;
  color: #8a8a8a;
}
.access select {
  appearance: none;
  flex: 1;
  padding: 0;
  border: 0;
  background: none;
  color: #444;
}
.access button {
  width: 97px;
  height: 36px;
  margin-right: -1px;
  background: #2770ff;
  color: #fff;
  font-weight: 700;
}
.pop-foot {
  display: flex;
  align-items: center;
  gap: 14px;
  height: 50px;
  padding: 0 36px 0 24px;
  background: #eee;
  font-size: 14px;
}
.way {
  display: flex;
  align-items: center;
  justify-content: center;
  width: 28px;
  height: 28px;
  border: 1px solid #d2d2d2;
  border-radius: 50%;
}
.settings {
  display: flex;
  align-items: center;
  gap: 7px;
  margin-left: auto;
}
.meter {
  position: absolute;
  right: -1px;
  top: 737px;
  width: 8px;
  height: 56px;
  stroke: none;
}
```
